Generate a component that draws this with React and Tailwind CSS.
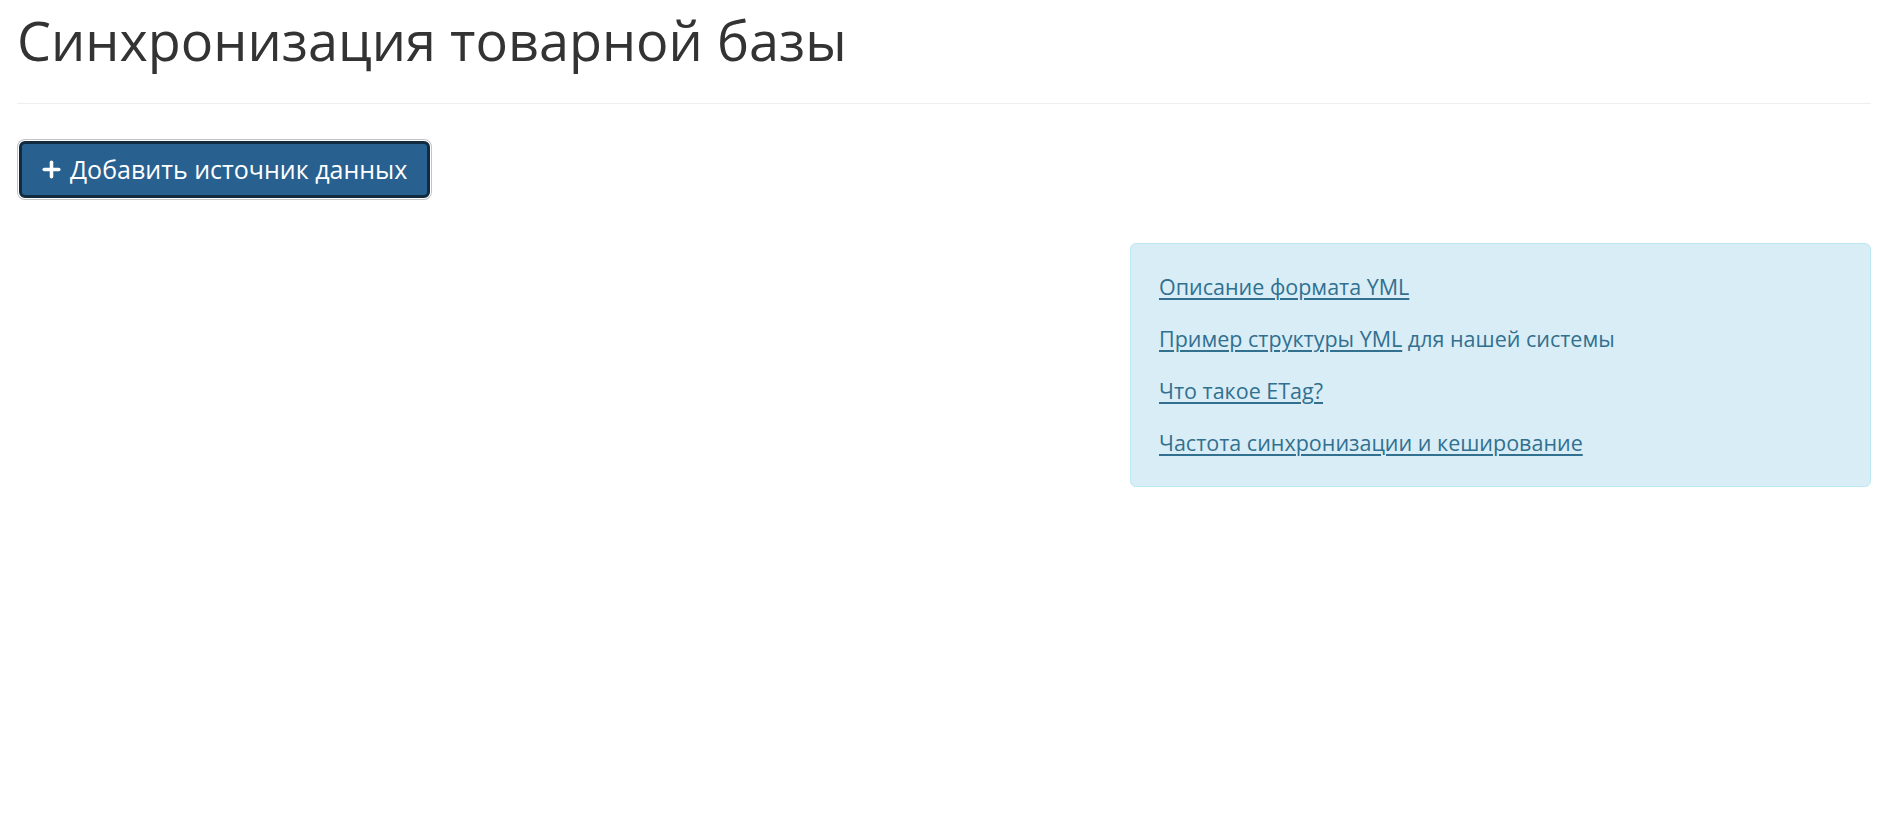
import { Plus } from 'lucide-react';

// Help links shown in the info panel
const helpLinks = [
  { label: 'Описание формата YML' },
  { label: 'Пример структуры YML', tail: ' для нашей системы' },
  { label: 'Что такое ETag?' },
  { label: 'Частота синхронизации и кеширование' },
];

export default function App() {
  return (
    <div className="min-h-screen w-full bg-white pl-[17px] pr-[19px] font-['Open_Sans',sans-serif] text-[#333]">
      {/* Page header */}
      <div className="border-b border-[#eee] pb-[33px]">
        <h1 className="mt-[10px] text-[54px] font-normal leading-[60px] text-[#333]">
          Синхронизация товарной базы
        </h1>
      </div>

      {/* Add source button */}
      <div className="mt-[37px]">
        <button
          type="button"
          className="ml-[2px] flex h-[57px] items-center gap-[6px] rounded-[6px] border-[3px] border-[#122b40] bg-[#286090] pl-[17px] pr-[20px] text-[25px] text-white ring-1 ring-[#c4c4c4] ring-offset-1"
        >
          <Plus className="h-[25px] w-[25px]" strokeWidth={3.4} />
          <span>Добавить источник данных</span>
        </button>
      </div>

      {/* Info panel */}
      <div className="mt-[45px] flex justify-end">
        <div className="w-[741px] rounded-[6px] border border-[#bce8f1] bg-[#d9edf7] pl-[28px] pr-[28px] pt-[25px] pb-[25px] text-[21.5px] leading-[36px] text-[#31708f]">
          {helpLinks.map((item, i) => (
            <p key={item.label} className={i < helpLinks.length - 1 ? 'mb-[16px]' : ''}>
              <a href="#" className="text-[#31708f] underline decoration-2 underline-offset-[3px]">
                {item.label}
              </a>
              {item.tail}
            </p>
          ))}
        </div>
      </div>
    </div>
  );
}
